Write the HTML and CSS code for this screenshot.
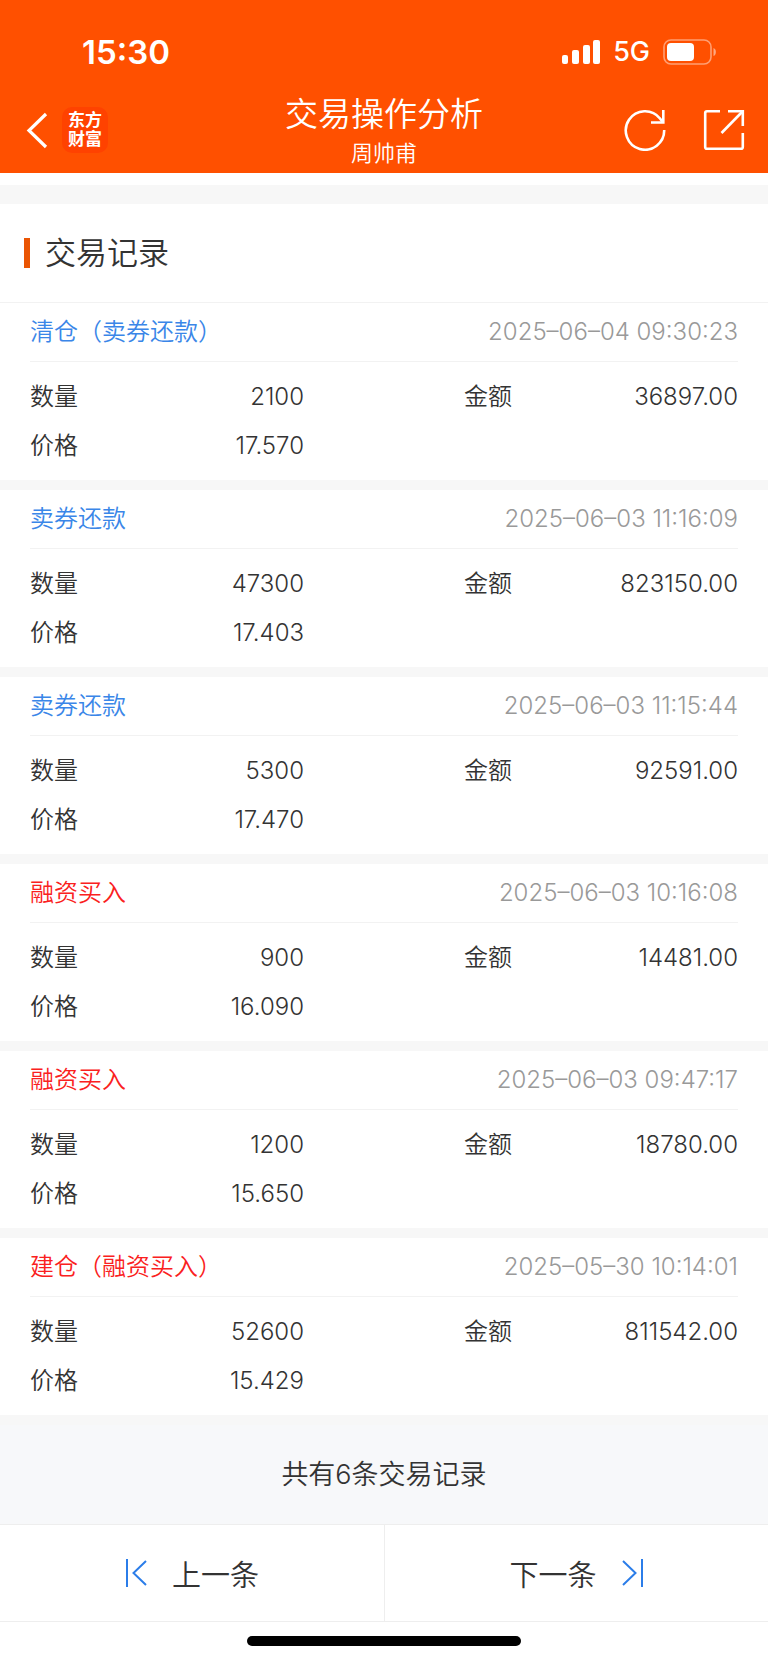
FILE: index.html
```html
<!doctype html>
<html lang="zh-CN">
	<head>
		<meta charset="utf-8">
		<meta name="viewport" content="width=device-width, initial-scale=1">
		<title>交易操作分析</title>
		<link rel="stylesheet" href="styles.css">
	</head>
	<body>
		
		<header>
			<div class="status-bar">
				<span class="clock">15:30</span>
				<div class="status-icons">
					<svg width="40" height="26" viewBox="0 0 40 26" fill="#fff">
						<rect x="1" y="16" width="6" height="9" rx="2"/>
						<rect x="11" y="11" width="7" height="14" rx="2"/>
						<rect x="22" y="6" width="7" height="19" rx="2"/>
						<rect x="32" y="1" width="7" height="24" rx="2"/>
					</svg>
					<span class="network">5G</span>
					<svg width="56" height="26" viewBox="0 0 56 26">
						<rect x="2" y="1" width="47" height="24" rx="7" fill="none" stroke="#fff" stroke-opacity=".45" stroke-width="1.6"/>
						<rect x="5" y="4" width="27" height="18" rx="4" fill="#fff"/>
						<path d="M51.500 9c3.200 1.200 3.200 7 0 8z" fill="#fff" fill-opacity=".5"/>
					</svg>
				</div>
			</div>
			<nav class="nav-bar">
				<div class="nav-left">
					<button class="icon-button" aria-label="返回">
						<svg width="26" height="40" viewBox="0 0 26 40" fill="none" stroke="#fff" stroke-width="3.200">
							<path d="M23 4L6 20.500L23 37"/>
						</svg>
					</button>
					<a class="logo" href="#">东方<br>财富</a>
				</div>
				<div class="nav-title">
					<h1>交易操作分析</h1>
					<p>周帅甫</p>
				</div>
				<div class="nav-right">
					<button class="icon-button" aria-label="刷新">
						<svg width="42" height="42" viewBox="0 0 42 42" fill="none" stroke="#fff" stroke-width="2.600">
							<path d="M40.200 21A19.200 19.200 0 1 1 36 9.500L39 13.500"/>
							<path d="M39.300 1V13.500H27"/>
						</svg>
					</button>
					<button class="icon-button" aria-label="分享">
						<svg width="42" height="42" viewBox="0 0 42 42" fill="none" stroke="#fff" stroke-width="2.600">
							<path d="M17 2.200H4Q2.200 2.200 2.200 4V38Q2.200 39.800 4 39.800H38Q39.800 39.800 39.800 38V24"/>
							<path d="M25 2.200H39.800V17"/>
							<path d="M39.500 2.500L18.500 24"/>
						</svg>
					</button>
				</div>
			</nav>
		</header>
		
		<main>
			<h2><span>交易记录</span></h2>
			
			<section class="record">
				<div class="record-head">
					<h3 class="sell">清仓（卖券还款）</h3>
					<time>2025–06–04 09:30:23</time>
				</div>
				<dl>
					<div><dt>数量</dt><dd>2100</dd></div>
					<div><dt>金额</dt><dd>36897.00</dd></div>
					<div><dt>价格</dt><dd>17.570</dd></div>
				</dl>
			</section>
			
			<section class="record">
				<div class="record-head">
					<h3 class="sell">卖券还款</h3>
					<time>2025–06–03 11:16:09</time>
				</div>
				<dl>
					<div><dt>数量</dt><dd>47300</dd></div>
					<div><dt>金额</dt><dd>823150.00</dd></div>
					<div><dt>价格</dt><dd>17.403</dd></div>
				</dl>
			</section>
			
			<section class="record">
				<div class="record-head">
					<h3 class="sell">卖券还款</h3>
					<time>2025–06–03 11:15:44</time>
				</div>
				<dl>
					<div><dt>数量</dt><dd>5300</dd></div>
					<div><dt>金额</dt><dd>92591.00</dd></div>
					<div><dt>价格</dt><dd>17.470</dd></div>
				</dl>
			</section>
			
			<section class="record">
				<div class="record-head">
					<h3 class="buy">融资买入</h3>
					<time>2025–06–03 10:16:08</time>
				</div>
				<dl>
					<div><dt>数量</dt><dd>900</dd></div>
					<div><dt>金额</dt><dd>14481.00</dd></div>
					<div><dt>价格</dt><dd>16.090</dd></div>
				</dl>
			</section>
			
			<section class="record">
				<div class="record-head">
					<h3 class="buy">融资买入</h3>
					<time>2025–06–03 09:47:17</time>
				</div>
				<dl>
					<div><dt>数量</dt><dd>1200</dd></div>
					<div><dt>金额</dt><dd>18780.00</dd></div>
					<div><dt>价格</dt><dd>15.650</dd></div>
				</dl>
			</section>
			
			<section class="record">
				<div class="record-head">
					<h3 class="buy">建仓（融资买入）</h3>
					<time>2025–05–30 10:14:01</time>
				</div>
				<dl>
					<div><dt>数量</dt><dd>52600</dd></div>
					<div><dt>金额</dt><dd>811542.00</dd></div>
					<div><dt>价格</dt><dd>15.429</dd></div>
				</dl>
			</section>
			
			<p class="summary">共有6条交易记录</p>
		</main>
		
		<footer>
			<div class="pager">
				<button>
					<svg width="22" height="28" viewBox="0 0 22 28" fill="none" stroke="#2b7de9" stroke-width="2">
						<path d="M2 0V28M21 2L8.500 14L21 26"/>
					</svg>
					上一条
				</button>
				<button>
					下一条
					<svg width="22" height="28" viewBox="0 0 22 28" fill="none" stroke="#2b7de9" stroke-width="2">
						<path d="M20 0V28M1 2L13.500 14L1 26"/>
					</svg>
				</button>
			</div>
			<div class="home-indicator"></div>
		</footer>
		
	</body>
</html>
```

FILE: styles.css
```css
* {
	box-sizing: border-box;
}
body {
	margin: 0;
	font-family: Inter, "Noto Sans CJK SC", sans-serif;
	font-size: 24px;
	font-weight: 350;
	color: #333;
	background: #fff;
}
h1, h2, h3, p, dl, dd {
	margin: 0;
	font-weight: 350;
}
dd, time {
	font-weight: 300;
}
button {
	padding: 0;
	border: 0;
	background: transparent;
	color: inherit;
	font: inherit;
	cursor: pointer;
}
svg {
	display: block;
	flex: none;
}

/* header */
header {
	background: #ff5000;
	color: #fff;
}
.status-bar {
	display: flex;
	justify-content: space-between;
	align-items: center;
	height: 87px;
	padding: 16px 50px 0 82px;
}
.clock {
	font-size: 33px;
	font-weight: 600;
}
.status-icons {
	display: flex;
	align-items: center;
	gap: 12px;
}
.network {
	font-size: 27px;
	font-weight: 500;
}
.nav-bar {
	display: grid;
	grid-template-columns: 1fr auto 1fr;
	align-items: center;
	height: 86px;
	padding: 0 23px;
}
.nav-left, .nav-right {
	display: flex;
	align-items: center;
}
.nav-left {
	gap: 13px;
}
.nav-right {
	justify-content: flex-end;
	gap: 37px;
}
.logo {
	width: 46px;
	height: 46px;
	padding-top: 4px;
	border-radius: 10px;
	background: #ff4200;
	color: #fff;
	font-size: 17px;
	font-weight: bold;
	line-height: 19px;
	text-align: center;
	text-decoration: none;
}
.nav-title {
	text-align: center;
}
.nav-title h1 {
	font-size: 33px;
	line-height: 46px;
}
.nav-title p {
	font-size: 22px;
	line-height: 32px;
}

/* records */
main {
	padding-top: 12px;
}
h2 {
	padding: 34px 24px;
	border-top: 19px solid #f7f7f7;
	border-bottom: 1px solid #f2f2f2;
	font-size: 31px;
	line-height: 30px;
}
h2 span {
	display: block;
	padding-left: 15px;
	border-left: 6px solid #ea5504;
}
.record {
	padding: 0 30px;
	border-bottom: 10px solid #f7f7f7;
}
.record-head {
	display: flex;
	justify-content: space-between;
	border-bottom: 1px solid #f2f2f2;
	line-height: 58px;
}
h3 {
	font-size: 24px;
}
.sell {
	color: #3a86e8;
}
.buy {
	color: #fa2020;
}
time {
	color: #999;
}
dl {
	display: grid;
	grid-template-columns: 1fr 1fr;
	column-gap: 160px;
	padding: 10px 0;
}
dl div {
	display: flex;
	justify-content: space-between;
	line-height: 49px;
}
.summary {
	background: #f7f8fa;
	font-size: 27px;
	line-height: 99px;
	text-align: center;
}

/* footer */
.pager {
	display: grid;
	grid-template-columns: 1fr 1fr;
	border: solid #eee;
	border-width: 1px 0;
}
.pager button {
	display: flex;
	justify-content: center;
	align-items: center;
	gap: 25px;
	height: 96px;
	font-size: 29px;
}
.pager button + button {
	border-left: 1px solid #eee;
}
.home-indicator {
	width: 274px;
	height: 10px;
	margin: 14px auto 17px;
	border-radius: 5px;
	background: #000;
}
```
